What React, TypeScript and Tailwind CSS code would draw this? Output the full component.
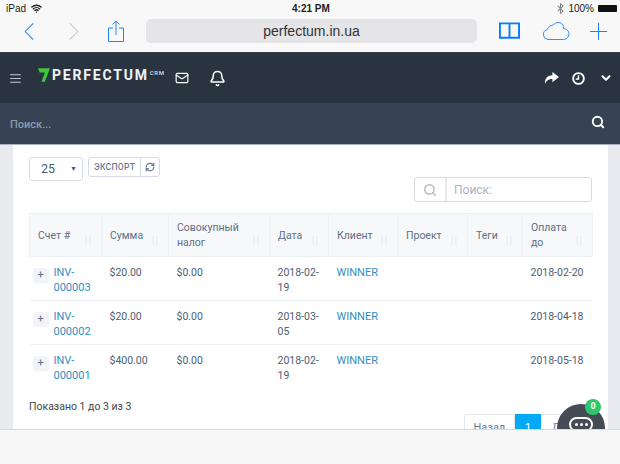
import { AlignJustify, Bell, ChevronDown, Mail, RefreshCw, Search, Wifi } from 'lucide-react';

const rows = [
  { id: '000003', sum: '$20.00', date: ['2018-02-', '19'], due: '2018-02-20' },
  { id: '000002', sum: '$20.00', date: ['2018-03-', '05'], due: '2018-04-18' },
  { id: '000001', sum: '$400.00', date: ['2018-02-', '19'], due: '2018-05-18' },
];

const headers = [
  { label: 'Счет #', width: 'w-[72px]' },
  { label: 'Сумма', width: 'w-[67px]' },
  { label: 'Совокупный налог', width: 'w-[101px]' },
  { label: 'Дата', width: 'w-[59px]' },
  { label: 'Клиент', width: 'w-[69px]' },
  { label: 'Проект', width: 'w-[70px]' },
  { label: 'Теги', width: 'w-[55px]' },
  { label: 'Оплата до', width: 'w-[70px]' },
];

function SortMark() {
  return (
    <svg viewBox="0 0 9 10" className="absolute right-[9px] top-[22px] h-[10px] w-[8px] text-[#e9ecf0]" fill="none" stroke="currentColor" strokeWidth="1.4">
      <path d="M2.500 0v10M6.500 0v10" />
    </svg>
  );
}

export default function App() {
  return (
    <div className="flex h-[464px] w-[620px] flex-col overflow-hidden bg-white font-['Roboto',sans-serif]">
      {/* Safari chrome */}
      <div className="h-[53px] shrink-0 border-b border-[#3a3f46] bg-[#f8f8f8]">
        <div className="relative flex h-[16px] items-center justify-between pl-[6px] pr-[3px] font-['Liberation_Sans',sans-serif] text-[10px] text-[#222]">
          <div className="flex items-center gap-[5px]">
            <span>iPad</span>
            <Wifi className="h-[11px] w-[11px]" strokeWidth={3} />
          </div>
          <span className="absolute left-[292px] top-[1px] font-bold">4:21 PM</span>
          <div className="flex items-center gap-[4px]">
            <svg viewBox="0 0 8 12" className="h-[11px] w-[7px] text-[#888]" fill="none" stroke="currentColor" strokeWidth="1.2">
              <path d="M1 3l6 6-3 2.500v-11l3 2.500-6 6" />
            </svg>
            <span>100%</span>
            <div className="h-[7px] w-[19px] rounded-[1px] bg-[#111]" />
          </div>
        </div>
        <div className="flex h-[30px] items-center">
          <svg viewBox="0 0 10 18" className="ml-[24px] h-[17px] w-[10px] text-[#1f86f5]" fill="none" stroke="currentColor" strokeWidth="1.100">
            <path d="M9.500 .5L1 9l8.500 8.500" />
          </svg>
          <svg viewBox="0 0 10 18" className="ml-[35px] h-[17px] w-[10px] text-[#c8c8c8]" fill="none" stroke="currentColor" strokeWidth="1.100">
            <path d="M.5 .5L9 9l-8.500 8.500" />
          </svg>
          <svg viewBox="0 0 16 22" className="ml-[29px] h-[22px] w-[16px] text-[#1f86f5]" fill="none" stroke="currentColor" strokeWidth="1">
            <path d="M5 8H.5v13.500h15V8H11M8 15V1M4.500 4.500L8 1l3.500 3.500" />
          </svg>
          <div className="ml-[22px] flex h-[24px] w-[331px] items-center justify-center rounded-[5px] bg-[#e5e5e7] font-['Liberation_Sans',sans-serif] text-[14px] text-[#333]">
            perfectum.in.ua
          </div>
          <svg viewBox="0 0 22 18" className="ml-[22px] h-[18px] w-[21px] text-[#0a7cff]" fill="none" stroke="currentColor" strokeWidth="2">
            <path d="M11 1v16M1 1h20v15H1z" />
          </svg>
          <svg viewBox="0 0 28 18" className="ml-[22px] h-[18px] w-[28px] text-[#1f86f5]" fill="none" stroke="currentColor" strokeWidth="0.900">
            <path d="M6 17.500a5 5 0 0 1-1-9.800A7 7 0 0 1 11 3a7 7 0 0 1 7-2.500 6 6 0 0 1 3.500 6 5.500 5.500 0 0 1 0 11z" />
          </svg>
          <svg viewBox="0 0 17 17" className="ml-[20px] h-[17px] w-[17px] text-[#1f86f5]" fill="none" stroke="currentColor" strokeWidth="1">
            <path d="M8.500 0v17M0 8.500h17" />
          </svg>
        </div>
      </div>

      {/* App header */}
      <div className="flex h-[50px] shrink-0 items-center bg-[#2a3441] text-white">
        <AlignJustify className="ml-[9px] h-[13px] w-[13px] text-[#c5c9cf]" />
        <svg viewBox="0 0 14 16" className="mb-[6px] ml-[16px] h-[16px] w-[12px]">
          <path d="M0 0h14l-6 16H4l4-11H2z" fill="#3ec63c" />
        </svg>
        <span className="mb-[5px] ml-[2px] text-[14px] font-bold tracking-[1.800px] text-[#f1f3f4]">PERFECTUM</span>
        <span className="mb-[12px] ml-[1px] text-[6px] font-bold tracking-[0.6px] text-[#c5c9cf]">CRM</span>
        <Mail className="ml-[10px] h-[14px] w-[14px]" />
        <Bell className="ml-[20px] h-[17px] w-[17px]" strokeWidth={2.2} />
        <div className="ml-auto flex items-center">
          <svg viewBox="0 0 16 14" className="h-[13px] w-[15px]" fill="#fff">
            <path d="M9 0l7 5.500L9 11V7.500C5 7.500 2.500 9 1 13c-.5-5 2-9.500 8-9.500z" />
          </svg>
          <svg viewBox="0 0 14 14" className="ml-[13px] h-[13px] w-[13px]" fill="none" stroke="#fff" strokeWidth="2">
            <circle cx="7" cy="7" r="5.800" />
            <path d="M7 3.500V7.500H4" strokeWidth="1.500" />
          </svg>
          <ChevronDown className="ml-[14px] mr-[7px] h-[14px] w-[14px]" strokeWidth={3.5} />
        </div>
      </div>

      {/* Search bar */}
      <div className="flex h-[42px] shrink-0 items-center justify-between border-b border-[#a9b1bf] bg-[#374252] pl-[10px] pr-[15px]">
        <span className="mt-[4px] text-[11px] font-medium text-[#8d9ab0]">Поиск...</span>
        <Search className="mb-[3px] h-[14px] w-[14px] text-white" strokeWidth={3.2} />
      </div>

      {/* Page content */}
      <div className="relative flex min-h-0 flex-1 flex-col overflow-hidden bg-[#e8eaef] pl-[13px] pr-[12px]">
        <div className="min-h-0 flex-1 overflow-hidden bg-white px-[16px] pt-[12px]">
          <div className="flex items-start gap-[5px]">
            <div className="flex h-[24px] w-[54px] items-center justify-between rounded-[3px] border border-[#d5dbe3] pl-[11px] pr-[5px] text-[12.5px] text-[#4e5d73]">
              <span>25</span>
              <span className="text-[7px] text-[#3d5a8a]">▼</span>
            </div>
            <div className="flex h-[20px] items-center rounded-[3px] border border-[#d5dbe3] text-[#6b7a90]">
              <span className="flex h-full items-center px-[5px] text-[8.5px] font-medium tracking-[0.3px]">ЭКСПОРТ</span>
              <span className="flex h-full items-center border-l border-[#d5dbe3] px-[4px]">
                <RefreshCw className="h-[10px] w-[10px]" strokeWidth={3} />
              </span>
            </div>
          </div>

          <div className="mt-[-4px] flex justify-end">
            <div className="flex h-[25px] w-[178px] items-center rounded-[3px] border border-[#d5dbe3]">
              <div className="flex h-full w-[32px] items-center justify-center border-r-2 border-[#e6e9ee]">
                <Search className="h-[14px] w-[14px] text-[#b3bcc9]" strokeWidth={2.500} />
              </div>
              <span className="pl-[7px] text-[12px] text-[#a9b3c1]">Поиск:</span>
            </div>
          </div>

          <table className="mt-[11px] w-[563px] table-fixed border-collapse text-[10.5px] text-[#4e5d73]">
            <thead>
              <tr className="h-[43px] bg-[#f7f8fa]">
                {headers.map((h) => (
                  <th key={h.label} className={`${h.width} relative border border-[#edf0f4] pl-[8px] pr-[14px] text-left leading-[15px] font-normal text-[#5f6e84]`}>
                    {h.label}
                    <SortMark />
                  </th>
                ))}
              </tr>
            </thead>
            <tbody>
              {rows.map((r) => (
                <tr key={r.id} className="h-[44px] border-b border-[#edf0f4] align-top last:border-b-0">
                  <td className="pt-[8px] pl-[3px]">
                    <div className="flex items-start gap-[5px]">
                      <span className="mt-[3px] flex h-[15px] w-[16px] shrink-0 items-center justify-center rounded-[3px] bg-[#f1f3f6] text-[11px] text-[#5f6e84]">+</span>
                      <span className="text-[11px] leading-[15px] text-[#2f8fc0]">
                        INV-
                        <br />
                        {r.id}
                      </span>
                    </div>
                  </td>
                  <td className="pt-[8px] pl-[8px] leading-[15px]">{r.sum}</td>
                  <td className="pt-[8px] pl-[8px] leading-[15px]">$0.00</td>
                  <td className="pt-[8px] pl-[8px] leading-[15px]">
                    {r.date[0]}
                    <br />
                    {r.date[1]}
                  </td>
                  <td className="pt-[8px] pl-[8px] text-[11px] leading-[15px] text-[#2f8fc0]">WINNER</td>
                  <td />
                  <td />
                  <td className="pt-[8px] pl-[8px] leading-[15px] whitespace-nowrap">{r.due}</td>
                </tr>
              ))}
            </tbody>
          </table>

          <p className="mt-[10px] text-[10.5px] text-[#444]">Показано 1 до 3 из 3</p>

          <div className="ml-[435px] flex h-[28px] w-[129px] text-[11px]">
            <span className="flex w-[51px] items-center justify-center rounded-l-[3px] border border-[#e3e6ea] text-[#6b7a90]">Назад</span>
            <span className="flex w-[26px] items-center justify-center bg-[#03a9f4] text-white">1</span>
            <span className="flex flex-1 items-center justify-start border-y border-[#e3e6ea] pl-[11px] text-[#6b7a90]">Д</span>
          </div>
        </div>

        {/* Chat launcher */}
        <div className="absolute left-[557px] top-[259px] flex h-[48px] w-[48px] items-start justify-center rounded-full bg-[#464c56] pt-[13px]">
          <div className="flex h-[15px] w-[24px] items-center justify-center gap-[2px] rounded-full border-2 border-white">
            <span className="h-[3px] w-[3px] rounded-full bg-white" />
            <span className="h-[3px] w-[3px] rounded-full bg-white" />
            <span className="h-[3px] w-[3px] rounded-full bg-white" />
          </div>
          <span className="absolute -top-[5px] left-[28px] flex h-[16px] w-[16px] items-center justify-center rounded-full bg-[#2fc76a] text-[9px] font-bold text-white">0</span>
        </div>

        {/* Safari bottom bar */}
        <div className="relative -ml-[13px] -mr-[12px] h-[35px] shrink-0 border-t border-[#d8d8d8] bg-[#f7f7f7]" />
      </div>
    </div>
  );
}
